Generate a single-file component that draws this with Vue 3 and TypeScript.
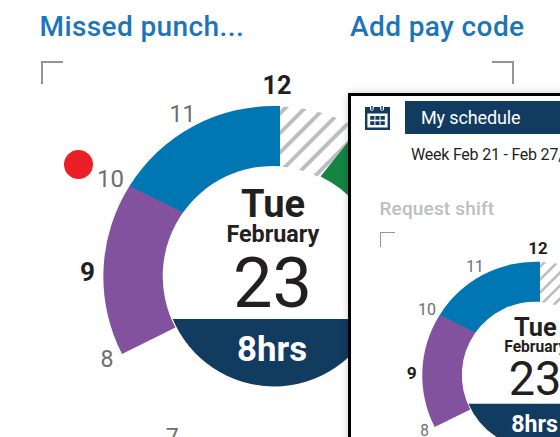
<script setup lang="ts">
import { defineComponent, h } from 'vue'

interface DialLabel {
  text: string
  x: number
  y: number
  size: number
  width: number
  kind: string
}

const segments = [
  { name: 'blue', d: 'M129.2 186.6A170 170 0 0 1 280 106.1V166.2A110 110 0 0 0 182.7 213Z' },
  { name: 'purple', d: 'M122 354A170 170 0 0 1 129.5 186L183 212.5A110 110 0 0 0 175.5 327.6Z' },
  { name: 'green', d: 'M358.5 128.6A170 170 0 0 1 440 240L380 250A110 110 0 0 0 320.6 176.6Z' },
  { name: 'navy', d: 'M172.7 319H375.3A110.2 110.2 0 0 1 274 386.5A110.2 110.2 0 0 1 172.7 319Z' },
]

const hatchOffsets = [393.3, 413, 432.5, 452, 471.5, 491]

const labels: DialLabel[] = [
  { text: '12', x: 262.5, y: 94.4, size: 26, width: 29, kind: 'strong' },
  { text: '11', x: 169.5, y: 121.6, size: 23.5, width: 26, kind: 'hour' },
  { text: '10', x: 97, y: 186.6, size: 23.5, width: 27, kind: 'hour' },
  { text: '9', x: 80, y: 281.4, size: 26, width: 15, kind: 'strong' },
  { text: '8', x: 100.5, y: 366.8, size: 23.5, width: 13, kind: 'hour' },
  { text: '7', x: 165.8, y: 444.5, size: 23.5, width: 13, kind: 'hour' },
  { text: 'Tue', x: 241, y: 216.8, size: 38, width: 64, kind: 'strong' },
  { text: 'February', x: 226.4, y: 241.5, size: 23.5, width: 93, kind: 'strong' },
  { text: '23', x: 233, y: 306.5, size: 71, width: 79, kind: 'day' },
  { text: '8hrs', x: 237, y: 361, size: 35, width: 70, kind: 'total' },
]

const DayDial = defineComponent({
  props: { clip: { type: String, required: true } },
  setup(props) {
    return () =>
      h('svg', { class: 'dial', viewBox: '73 66 400 400' }, [
        h('clipPath', { id: props.clip }, [
          h('path', { d: 'M280 106.2A170 170 0 0 1 358.5 128.6L319.8 177.5A110 110 0 0 0 280 166.4Z' }),
        ]),
        h('g', { 'clip-path': `url(#${props.clip})` },
          hatchOffsets.map((c) =>
            h('path', { class: 'hatch', d: `M${c - 80} 80L${c - 220} 220` }))),
        ...segments.map((s) => h('path', { class: s.name, d: s.d })),
        ...labels.map((l) =>
          h('text', { class: l.kind, x: l.x, y: l.y, 'font-size': l.size, textLength: l.width, lengthAdjust: 'spacingAndGlyphs' }, l.text)),
      ])
  },
})
</script>

<template>
  <main class="screen">
    <header class="actions">
      <span class="missed">Missed punch...</span>
      <span class="add">Add pay code</span>
    </header>
    <div class="corners">
      <i class="corner left"></i>
      <i class="corner right"></i>
    </div>
    <i class="punch"></i>
    <DayDial class="main-dial" clip="hatch-main" />
    <section class="window">
      <div class="bar">
        <svg class="calendar" viewBox="0 0 25 24">
          <path class="navy" fill-rule="evenodd" d="M0 1H5V3.5Q6.8 6 8.7 3.5V1H15.2V3.5Q17 6 19 3.5V1H25V24H0ZM2.4 7.4V21.6H22.6V7.4Z" />
          <path class="navy" d="M6.2 0H7.6V4H6.2ZM16.4 0H17.8V4H16.4ZM5.2 10H9.4V13.8H5.2ZM10.4 10H14.6V13.8H10.4ZM15.6 10H19.8V13.8H15.6ZM5.2 15.2H9.4V19H5.2ZM10.4 15.2H14.6V19H10.4ZM15.6 15.2H19.8V19H15.6Z" />
        </svg>
        <div class="title"><span>My schedule</span></div>
      </div>
      <div class="week"><span>Week Feb 21 - Feb 27,</span></div>
      <div class="request"><span>Request shift</span></div>
      <i class="corner small"></i>
      <DayDial class="small-dial" clip="hatch-small" />
    </section>
  </main>
</template>

<style>
body {
  background: #fff;
}
.dial {
  display: block;
  font-family: Roboto, sans-serif;
}
.dial text {
  fill: #231f20;
}
.dial .strong {
  font-weight: 700;
}
.dial .hour {
  fill: #6d6e71;
}
.dial .total {
  fill: #fff;
  font-weight: 700;
}
.purple {
  fill: #83529f;
}
.blue {
  fill: #0076b3;
}
.green {
  fill: #158443;
}
.navy {
  fill: #113b5f;
}
.hatch {
  fill: none;
  stroke: #bcbec0;
  stroke-width: 4;
}
</style>

<style scoped>
.screen {
  position: relative;
  width: 560px;
  height: 437px;
  overflow: hidden;
  font-family: Roboto, sans-serif;
}
.actions {
  display: flex;
  box-sizing: border-box;
  height: 61px;
  padding: 10px 0 0 39.5px;
  font-size: 28px;
  line-height: 34px;
  font-weight: 500;
  letter-spacing: 0.4px;
  color: #1c75bc;
  white-space: nowrap;
}
.missed {
  width: 310.5px;
}
.corners {
  display: flex;
  justify-content: space-between;
  padding: 0 46px 0 41px;
}
.corner {
  display: block;
  box-sizing: border-box;
  width: 22px;
  height: 23px;
  border: 0 solid #939598;
  border-top-width: 2px;
}
.left,
.small {
  border-left-width: 2px;
}
.right {
  border-right-width: 2px;
}
.punch {
  position: absolute;
  left: 64px;
  top: 150px;
  width: 29px;
  height: 29px;
  border-radius: 50%;
  background: #eb2027;
}
.main-dial {
  position: absolute;
  left: 73px;
  top: 66px;
  width: 400px;
  height: 400px;
}
.window {
  position: absolute;
  left: 348px;
  top: 93px;
  box-sizing: border-box;
  width: 400px;
  height: 500px;
  border: 3px solid #000;
  background: #fff;
  box-shadow: 0 0 8px rgba(0, 0, 0, 0.2);
  white-space: nowrap;
}
.bar {
  display: flex;
  padding: 5px 0 0 14px;
}
.calendar {
  width: 25px;
  height: 24px;
  margin: 5px 15px 0 0;
}
.title {
  flex: 1;
  height: 33px;
  padding-left: 16px;
  background: #113b5f;
  color: #fff;
  font-size: 18px;
  line-height: 33px;
  letter-spacing: -0.13px;
}
.week {
  padding: 11px 0 0 60px;
  font-size: 16px;
  line-height: 20px;
  letter-spacing: -0.22px;
  color: #231f20;
}
.request {
  padding: 33px 0 0 28.5px;
  font-size: 19px;
  line-height: 22px;
  font-weight: 500;
  letter-spacing: 0.16px;
  color: #bcbec0;
}
.small {
  width: 15px;
  height: 15px;
  margin: 12px 0 0 29px;
  border-top-width: 1.5px;
  border-left-width: 1.5px;
}
.small-dial {
  position: absolute;
  left: 50.6px;
  top: 139.1px;
  width: 266.67px;
  height: 266.67px;
}
</style>
